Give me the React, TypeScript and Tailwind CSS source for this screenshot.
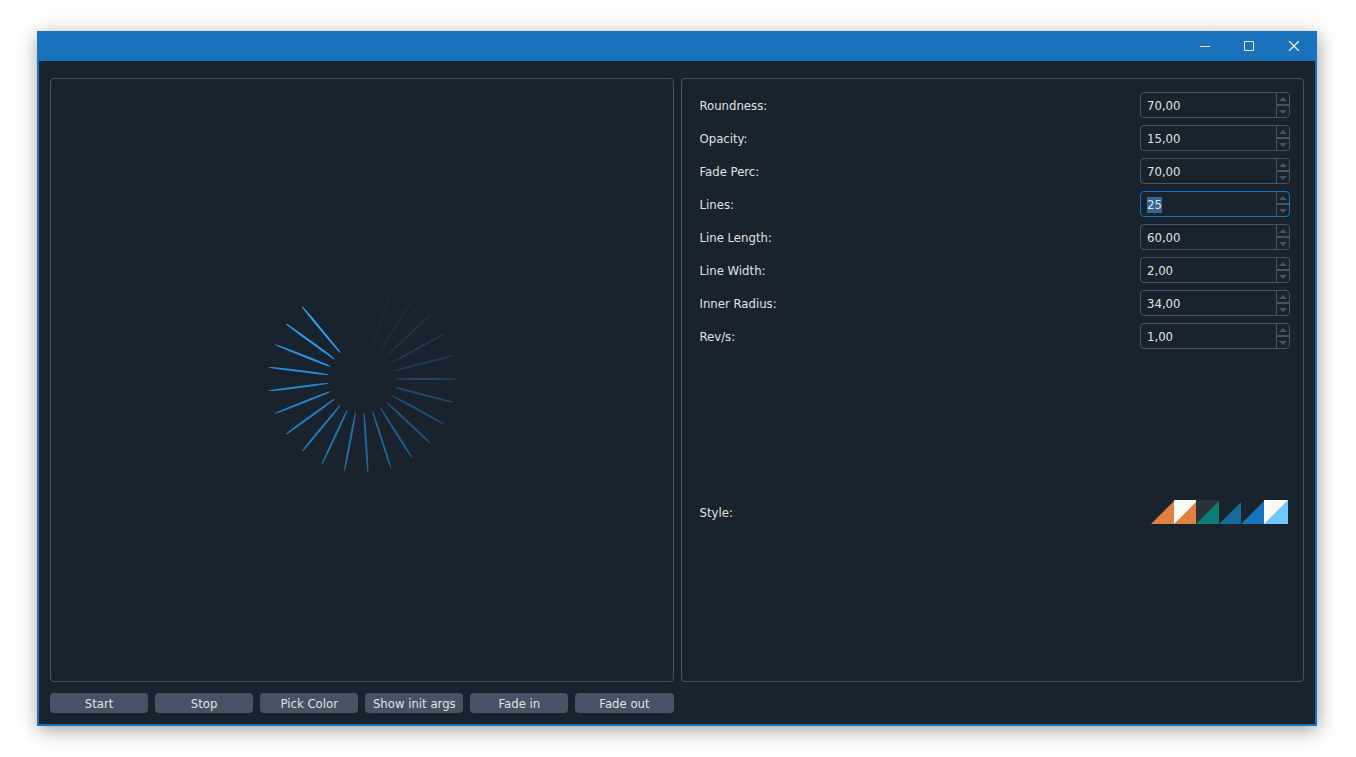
import React from "react";

const LINE_COUNT = 25;
const LINE_LENGTH = 60;
const INNER_RADIUS = 34;
const LEAD = 16;

function Spinner() {
  return (
    <svg width="192" height="192" viewBox="-96 -96 192 192" role="img" aria-label="Waiting spinner">
      {Array.from({ length: LINE_COUNT }, (_, i) => {
        const distance = (LEAD - i + LINE_COUNT) % LINE_COUNT;
        return (
          <rect
            key={i}
            x={INNER_RADIUS}
            y={-1}
            width={LINE_LENGTH}
            height={2}
            rx={21}
            ry={0.8}
            fill="#2a9ff2"
            opacity={Math.max(0.03, 1 - distance / 22)}
            transform={`rotate(${(360 / LINE_COUNT) * i})`}
          />
        );
      })}
    </svg>
  );
}

interface Field {
  id: string;
  label: string;
  value: string;
  active?: boolean;
}

const fields: Field[] = [
  { id: "roundness", label: "Roundness:", value: "70,00" },
  { id: "opacity", label: "Opacity:", value: "15,00" },
  { id: "fade", label: "Fade Perc:", value: "70,00" },
  { id: "lines", label: "Lines:", value: "25", active: true },
  { id: "length", label: "Line Length:", value: "60,00" },
  { id: "width", label: "Line Width:", value: "2,00" },
  { id: "radius", label: "Inner Radius:", value: "34,00" },
  { id: "revs", label: "Rev/s:", value: "1,00" },
];

function SpinField({ id, label, value, active }: Field) {
  const ref = React.useRef<HTMLInputElement>(null);
  React.useEffect(() => {
    if (active && ref.current) {
      ref.current.focus();
      ref.current.select();
    }
  }, [active]);
  return (
    <div className="flex items-center justify-between">
      <label htmlFor={id} className="pt-0.5">{label}</label>
      <div className="flex h-[26px] w-[150px] overflow-hidden rounded border border-[#455364] focus-within:border-[#1a72bb]">
        <input
          ref={ref}
          id={id}
          defaultValue={value}
          className="min-w-0 flex-1 bg-transparent pl-1.5 pt-0.5 outline-none selection:bg-[#346792] selection:text-[#e0e1e3]"
        />
        <div className="flex w-[13px] flex-col border-l border-[#455364]">
          <button type="button" aria-label={`Increase ${label}`} className="flex flex-1 items-center justify-center border-b border-[#455364]">
            <svg width="8" height="4" viewBox="0 0 8 4" fill="#455364"><path d="M0 4 4 0 8 4z" /></svg>
          </button>
          <button type="button" aria-label={`Decrease ${label}`} className="flex flex-1 items-center justify-center border-t border-[#455364]">
            <svg width="8" height="4" viewBox="0 0 8 4" fill="#455364"><path d="M0 0 4 4 8 0z" /></svg>
          </button>
        </div>
      </div>
    </div>
  );
}

const actions = ["Start", "Stop", "Pick Color", "Show init args", "Fade in", "Fade out"];

function StyleSwatches() {
  return (
    <svg width="137" height="24" viewBox="0 0 137 24" role="img" aria-label="Style themes">
      <path d="M0 24 23 1V24z" fill="#de8244" />
      <path d="M23 0H45V24H23z" fill="#fafafa" />
      <path d="M23 24 45 2V24z" fill="#de8244" />
      <path d="M45 0H68V24H45z" fill="#28323a" />
      <path d="M45 24 68 1V24z" fill="#0c7d74" />
      <path d="M68 24 90 2V24z" fill="#166a9c" />
      <path d="M90 24 113 1V24z" fill="#1a72bb" />
      <path d="M113 0H137V24H113z" fill="#fafafa" />
      <path d="M113 24 137 0V24z" fill="#73c7ff" />
    </svg>
  );
}

export default function App() {
  return (
    <div className="flex min-h-screen flex-col bg-white pb-[31px] pl-[37px] pr-[39px] pt-[31px] font-['DejaVu_Sans_Condensed','Noto_Sans',sans-serif] text-[13px] leading-4 text-[#e0e1e3]">
      <div className="flex flex-1 flex-col border-2 border-t-0 border-[#1a72bb] bg-[#19232d] shadow-[1px_4px_18px_rgba(0,0,0,0.38)]">
        <header className="flex h-[30px] shrink-0 justify-end bg-[#1a72bb]">
          <button type="button" aria-label="Minimize" className="flex w-11 items-center justify-center">
            <svg width="10" height="10" viewBox="0 0 10 10"><path d="M0 5.5H10" stroke="#e8e8e8" /></svg>
          </button>
          <button type="button" aria-label="Maximize" className="flex w-11 items-center justify-center">
            <svg width="10" height="10" viewBox="0 0 10 10" fill="none"><path d="M.5 .5H9.5V9.5H.5z" stroke="#e8e8e8" /></svg>
          </button>
          <button type="button" aria-label="Close" className="flex w-11 items-center justify-center">
            <svg width="12" height="10" viewBox="0 0 12 10"><path d="M2 0 12 10M12 0 2 10" stroke="#e8e8e8" strokeWidth="1.4" /></svg>
          </button>
        </header>
        <main className="grid flex-1 grid-cols-2 gap-[7px] px-[11px] pb-[11px] pt-[17px]">
          <div className="flex flex-col gap-[11px]">
            <section className="flex flex-1 items-center justify-center rounded border border-[#455364] pb-0.5">
              <Spinner />
            </section>
            <div className="grid grid-cols-6 gap-[7px]">
              {actions.map((name) => (
                <button key={name} type="button" className="h-5 whitespace-nowrap rounded bg-[#455364] pt-0.5">
                  {name}
                </button>
              ))}
            </div>
          </div>
          <section className="mb-[31px] flex flex-col rounded border border-[#455364] pl-[18px] pr-[13px] pt-[13px]">
            <div className="flex flex-col gap-[7px]">
              {fields.map((field) => (
                <SpinField key={field.id} {...field} />
              ))}
            </div>
            <div className="flex flex-1 items-center justify-between pb-1.5 pr-0.5">
              <span className="pt-0.5">Style:</span>
              <StyleSwatches />
            </div>
          </section>
        </main>
      </div>
    </div>
  );
}
